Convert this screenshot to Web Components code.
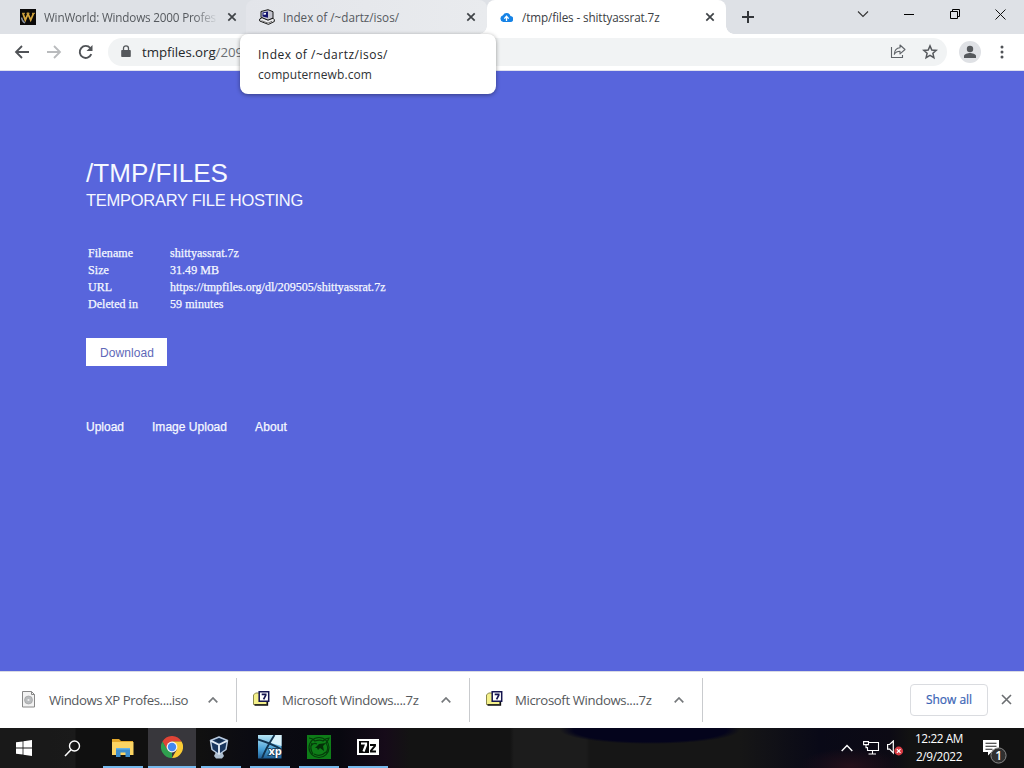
<!DOCTYPE html>
<html lang="en">
<head>
<meta charset="utf-8">
<title>/tmp/files</title>
<style>
html,body{margin:0;width:1024px;height:768px;overflow:hidden}
body{font-family:"Open Sans","Noto Sans",sans-serif;font-size:12px;color:#3c4043}
</style>
</head>
<body>
<desktop-screen></desktop-screen>
<script>
const define = (name, html, init) => customElements.define(name, class extends HTMLElement {
  connectedCallback() {
    if (this.shadowRoot) return;
    const t = document.createElement('template');
    t.innerHTML = html;
    this.attachShadow({ mode: 'open' }).append(t.content.cloneNode(true));
    if (init) init(this, this.shadowRoot);
  }
});

/* Single line label; tracks its letters so that they span the "w" attribute. */
define('fit-text', `<style>:host{display:block;white-space:pre;flex:none}span{display:inline-block}</style><span><slot></slot></span>`, (el, root) => {
  const s = root.querySelector('span'), w = +el.getAttribute('w');
  if (!w) return;
  el.style.width = w + 'px';
  const n = s.getBoundingClientRect().width;
  s.style.letterSpacing = ((w - n) / el.textContent.length).toFixed(3) + 'px';
});

const icons = {
  winworld: `<svg width="16" height="16" viewBox="0 0 16 16"><path d="M0 0h16v16H0z" fill="#0b0a0a"/><path d="M3 4.500l2.300 6.500L8 5l2.700 6L13.500 4.500" fill="none" stroke="#d3a53e" stroke-width="1.800"/><path d="M2 4.300h3M6.500 4.300h3M12 4.300h3" stroke="#d3a53e" stroke-width="1"/><path d="M1.500 8.500c.5 2.500 1.500 4.500 3.500 5.500" fill="none" stroke="#8b93a0" stroke-width="1.300"/></svg>`,
  computer: `<svg width="16" height="16" viewBox="0 0 16 16"><path d="M2 2.500L9 .7l5 2v6.500L9 11.500l-7-3z" fill="#c4c4ce" stroke="#161616"/><path d="M3.500 3.500L9 2.600v6.200L3.500 7.600z" fill="#14146e"/><path d="M4.500 4.300l2.500-.5v1.700l-2.500.2z" fill="#fff"/><path d="M.7 10l2.300-1.300 6 2.500 5-2 1.300 1.500v1.800L9.500 15.400.7 12z" fill="#ececee" stroke="#161616"/><path d="M2.500 11.700l6.500 2.400 4-1.800" fill="none" stroke="#777"/></svg>`,
  cloud: `<svg width="13" height="11" viewBox="0 0 13 11"><path d="M10.500 4A4 4 0 0 0 3 3.200 3.500 3.500 0 0 0 3.200 10H10a3 3 0 0 0 .5-6z" fill="#1683e6"/><path d="M6.500 9V4.500M4.300 6.600l2.200-2.300 2.200 2.300" stroke="#fff" stroke-width="1.300" fill="none"/></svg>`,
  close: `<svg width="10" height="10" viewBox="0 0 10 10"><path d="M1.300 1.300l7.400 7.400M8.700 1.300L1.300 8.700" stroke="#3f4347" stroke-width="1.700"/></svg>`,
  plus: `<svg width="12" height="12" viewBox="0 0 12 12"><path d="M6 0v12M0 6h12" stroke="#33363a" stroke-width="2"/></svg>`,
  back: `<svg width="16" height="14" viewBox="0 0 16 14"><path d="M15 7H2M8 1L2 7l6 6" fill="none" stroke="#505357" stroke-width="1.800"/></svg>`,
  forward: `<svg width="16" height="14" viewBox="0 0 16 14"><path d="M1 7h13M8 1l6 6-6 6" fill="none" stroke="#b9bbbd" stroke-width="1.800"/></svg>`,
  reload: `<svg width="16" height="16" viewBox="0 0 16 16"><path d="M13.300 10.200A6 6 0 1 1 12.300 4" fill="none" stroke="#505357" stroke-width="1.900"/><path d="M14.500 1v6h-6z" fill="#505357"/></svg>`,
  lock: `<svg width="10" height="13" viewBox="0 0 10 13"><path d="M1 5h8a.8.800 0 0 1 .8.800v5.400a.8.800 0 0 1-.8.800H1a.8.800 0 0 1-.8-.8V5.800A.8.800 0 0 1 1 5z" fill="#55585c"/><path d="M2.500 5.500V3.300a2.500 2.500 0 0 1 5 0v2.200" fill="none" stroke="#55585c" stroke-width="1.300"/></svg>`,
  share: `<svg width="16" height="14" viewBox="0 0 16 14"><path d="M1.500 3v10.500h11V11" fill="none" stroke="#5f6368" stroke-width="1.100"/><path d="M4.300 10.300C4.500 6.500 6.500 4 10 3.800V1L15 5.500l-5 4.300V7.200C7.200 7.200 5.500 8.200 4.300 10.300z" fill="none" stroke="#5f6368" stroke-width="1.100" stroke-linejoin="round"/></svg>`,
  star: `<svg width="16" height="16" viewBox="0 0 16 16"><path d="M8 1.900l1.800 4.100 4.400.4-3.300 2.900 1 4.400L8 11.400l-3.900 2.300 1-4.400-3.300-2.900 4.400-.4z" fill="none" stroke="#55585c" stroke-width="1.500"/></svg>`,
  avatar: `<svg width="22" height="22" viewBox="0 0 22 22"><circle cx="11" cy="11" r="11" fill="#dfe1e5"/><circle cx="11" cy="8" r="3.200" fill="#55585c"/><path d="M5 17v-2c0-2 4-3 6-3s6 1 6 3v2z" fill="#55585c"/></svg>`,
  dots: `<svg width="4" height="14" viewBox="0 0 4 14"><g fill="#505357"><circle cx="2" cy="2" r="1.500"/><circle cx="2" cy="7" r="1.500"/><circle cx="2" cy="12" r="1.500"/></g></svg>`,
  chevdown: `<svg width="12" height="7" viewBox="0 0 12 7"><path d="M1 .5l5 5 5-5" fill="none" stroke="#333" stroke-width="1.100"/></svg>`,
  minimize: `<svg width="10" height="1" viewBox="0 0 10 1"><path d="M0 0h10v1H0z"/></svg>`,
  restore: `<svg width="10" height="10" viewBox="0 0 10 10"><path d="M.5 2.500h7v7h-7zM2.500 2V.5h7v7H8" fill="none" stroke="#000"/></svg>`,
  wclose: `<svg width="11" height="11" viewBox="0 0 11 11"><path d="M.5.5l10 10M10.500.5l-10 10" stroke="#111"/></svg>`,
  disc: `<svg width="13" height="17" viewBox="0 0 13 17"><path d="M.5.5h9l3 3v12.500H.5z" fill="#f3f3f3" stroke="#888"/><path d="M9.500.5v3h3" fill="none" stroke="#888"/><circle cx="6.500" cy="9" r="4" fill="#b9bcbe" stroke="#999" stroke-width=".6"/><circle cx="6.500" cy="9" r="1.100" fill="#eee"/></svg>`,
  archive: `<svg width="17" height="15" viewBox="0 0 17 15"><path d="M.5 4l2-2h4l1 2h6v9.500H.5z" fill="#f4f08a" stroke="#8b894c"/><path d="M1.500 14h13V10" fill="none" stroke="#111" stroke-width="1.300"/><path d="M6.200.8h9.500v9.500H6.200z" fill="#fff" stroke="#15154f" stroke-width="1.500"/><path d="M8.700 3.300h4v1L10.600 8.400" fill="none" stroke="#15154f" stroke-width="1.700"/></svg>`,
  chevup: `<svg width="10" height="6" viewBox="0 0 10 6"><path d="M.7 5.300L5 1l4.300 4.300" fill="none" stroke="#75787b" stroke-width="1.700"/></svg>`,
  shelfclose: `<svg width="11" height="11" viewBox="0 0 11 11"><path d="M1 1l9 9M10 1l-9 9" stroke="#6b6e71" stroke-width="1.600"/></svg>`,
  windows: `<svg width="16" height="16" viewBox="0 0 16 16"><path d="M0 2.300L6.600 1.400v6.200H0zM7.400 1.300L16 0v7.600H7.400zM0 8.400h6.600v6.200L0 13.700zM7.400 8.400H16V16l-8.600-1.300z" fill="#fff"/></svg>`,
  search: `<svg width="17" height="17" viewBox="0 0 17 17"><circle cx="10.500" cy="6" r="5" fill="none" stroke="#fff" stroke-width="1.400"/><path d="M7 9.800L1 16" stroke="#fff" stroke-width="1.500"/></svg>`,
  folder: `<svg width="22" height="20" viewBox="0 0 22 20"><path d="M0 2h7l2 2h12v4H0z" fill="#e3a82b"/><path d="M0 5h21.500v13H0z" fill="#fbd463"/><path d="M4 20v-8.500h14V20h-4.500v-4.500h-5V20z" fill="#3d8dcc"/><path d="M4 11h14v1.500H4z" fill="#64b2e6"/></svg>`,
  chrome: `<svg width="22" height="22" viewBox="0 0 22 22"><path d="M1.470 5.500A11 11 0 0 1 20.530 5.500H11L6 14z" fill="#e04436"/><path d="M1.470 5.500L6.240 13.750 11 16.500 11 22A11 11 0 0 1 1.470 5.500z" fill="#2fa04f"/><path d="M20.530 5.500H11l4.760 8.250L11 22A11 11 0 0 0 20.530 5.500z" fill="#fbcc34"/><circle cx="11" cy="11" r="5.400" fill="#f5f5f5"/><circle cx="11" cy="11" r="4.200" fill="#4388ef"/></svg>`,
  cube: `<svg width="22" height="23" viewBox="0 0 22 23"><path d="M8 16h6l2 4-2 2.500H8L6 20z" fill="#aebfd0"/><path d="M11 1l8.500 3.500L18 13.500l-7 5-7-5L2.500 4.500z" fill="#19365e" stroke="#b9cbe0" stroke-width="1.500" stroke-linejoin="round"/><path d="M3 4.800l8 4 8-4M11 8.500v10" fill="none" stroke="#dfe9f3" stroke-width="1.900"/><path d="M6.500 4.300L11 2.500l4.500 1.800L11 6.500z" fill="#102947"/></svg>`,
  xp: `<svg width="24" height="24" viewBox="0 0 24 24"><defs><linearGradient id="g" x2="0" y2="1"><stop stop-color="#b6e4f5"/><stop offset=".6" stop-color="#4aa2d8"/><stop offset="1" stop-color="#1f5f96"/></linearGradient></defs><path d="M0 0h23.500v23.500H0z" fill="url(#g)"/><path d="M16 0h7.500v11L11 7.500z" fill="#d9f1fa"/><path d="M16.500 0C12 7 7 15 4 23.500M0 4.500C8 7 16 10 23.500 14.500" fill="none" stroke="#123450" stroke-width="1.900"/><text x="10.500" y="20" font-family="Open Sans,sans-serif" font-size="11" font-weight="700" fill="#fff" stroke="#123450" stroke-width="1.500" paint-order="stroke">xp</text></svg>`,
  green: `<svg width="24" height="24" viewBox="0 0 24 24"><path d="M0 0h24v24H0z" fill="#0e7d18"/><g fill="none" stroke="#053c0a" stroke-width="1.200"><circle cx="12" cy="12.500" r="10"/><path d="M2 3c3 0 5 2 6 3 3-1 6-1 8 0 2-2 4-3 6-3-1 3-2 4-3 5 2 3 2 7 0 10M5 8c-2 4-1 8 1 11M7 19c4 2 8 2 12-2M4 11c2-3 4-3 6-2"/></g><path d="M8 13l4-4 7-1-3 3 1 5-4-3-2 2-1-2z" fill="#042e08"/></svg>`,
  sevenzip: `<svg width="22" height="16" viewBox="0 0 22 16"><path d="M0 0h22v16H0z" fill="#fff"/><path d="M2 2h10v12H2z" fill="#080808"/><path d="M4 4.500h5V6L6.500 12.500" fill="none" stroke="#fff" stroke-width="2.200"/><path d="M13 6h5v1l-4 4.500v1h5" fill="none" stroke="#080808" stroke-width="1.900"/></svg>`,
  traychev: `<svg width="12" height="8" viewBox="0 0 12 8"><path d="M.7 7L6 1.500 11.300 7" fill="none" stroke="#fff" stroke-width="1.400"/></svg>`,
  network: `<svg width="17" height="14" viewBox="0 0 17 14"><path d="M6 1.500h9.500v8h-11V6.500M9.500 9.500v3M5.500 13h7.500" fill="none" stroke="#fff" stroke-width="1.100"/><path d="M.6.600h4.900v3H.6zM3 3.600v3h2" fill="none" stroke="#fff" stroke-width="1.100"/></svg>`,
  speaker: `<svg width="17" height="16" viewBox="0 0 17 16"><path d="M.6 4.500h2L6.300 1v12L2.600 9.200h-2z" fill="none" stroke="#fff" stroke-width="1.200"/><circle cx="11.700" cy="11" r="4.400" fill="#d83b43"/><path d="M9.900 9.200l3.600 3.600M13.500 9.200l-3.600 3.600" stroke="#fff" stroke-width="1.200"/></svg>`,
  notify: `<svg width="26" height="25" viewBox="0 0 26 25"><path d="M0 1h16v12H8.500L5 16.500V13H0z" fill="#fff"/><path d="M2.500 4.300h11M2.500 7.300h11M2.500 10.300h7" stroke="#222" stroke-width="1.100"/><circle cx="15.500" cy="16.500" r="7.600" fill="#303030" stroke="#888" stroke-width="1"/><text x="12.300" y="21" font-family="Open Sans,sans-serif" font-size="12" font-weight="600" fill="#fff">1</text></svg>`
};
define('ui-icon', `<style>:host{display:block;flex:none;line-height:0}svg{display:block}</style>`, (el, root) => {
  root.append(document.createRange().createContextualFragment(icons[el.getAttribute('name')]));
});

define('tab-item', `<style>
:host{display:flex;align-items:center;height:34px;box-sizing:border-box;flex:none;font-size:11.700px;color:#55595e}
.label{flex:1;overflow:hidden;min-width:0;padding-bottom:1px}
:host([fade]) .label{-webkit-mask:linear-gradient(90deg,#000 150px,transparent 174px)}
</style><slot name="icon"></slot><div class="label"><slot></slot></div><ui-icon name="close"></ui-icon>`);

define('tab-strip', `<style>
:host{display:flex;height:34px;background:#dee1e6}
.one{width:246px;padding:0 9px 0 20px;gap:8px}
.two{width:241px;padding:0 11px 0 13px;gap:8px;background:linear-gradient(90deg,#e3e5ea,#e9ebee);border-radius:8px 8px 0 0}
.three{width:239px;padding:0 11px 0 13px;gap:9px;background:#fff;border-radius:8px 8px 0 0;color:#3c4043;position:relative}
.three::before,.three::after{content:"";position:absolute;bottom:0;width:8px;height:8px}
.three::before{left:-8px;background:radial-gradient(circle at 0 0,transparent 7.500px,#fff 8px)}
.three::after{right:-8px;background:radial-gradient(circle at 100% 0,transparent 7.500px,#fff 8px)}
.new{margin:11px 0 0 16px}
.controls{display:flex;align-items:center;height:28px;margin-left:auto;padding-right:18px}
</style>
<tab-item class="one" fade><ui-icon slot="icon" name="winworld"></ui-icon><fit-text w="172">WinWorld: Windows 2000 Profes</fit-text></tab-item>
<tab-item class="two"><ui-icon slot="icon" name="computer"></ui-icon><fit-text w="116">Index of /~dartz/isos/</fit-text></tab-item>
<tab-item class="three"><ui-icon slot="icon" name="cloud"></ui-icon><fit-text w="137.500">/tmp/files - shittyassrat.7z</fit-text></tab-item>
<ui-icon class="new" name="plus"></ui-icon>
<div class="controls"><ui-icon name="chevdown"></ui-icon><ui-icon name="minimize" style="margin-left:35px"></ui-icon><ui-icon name="restore" style="margin-left:36px"></ui-icon><ui-icon name="wclose" style="margin-left:35px"></ui-icon></div>`);

define('tool-bar', `<style>
:host{display:flex;align-items:center;box-sizing:border-box;height:37px;padding:0 20px 1px 14px;background:#fff;border-bottom:1px solid #dfe0ee}
.url{display:flex;align-items:center;box-sizing:border-box;width:839px;height:28px;margin-left:14px;padding:0 9px 0 13px;border-radius:14px;background:#f1f3f4;font-size:13.300px;color:#6a6e73}
b{font-weight:400;color:#25282b}
.actions{display:flex;gap:16px;margin-left:auto}
</style>
<ui-icon name="back"></ui-icon><ui-icon name="forward" style="margin-left:16px"></ui-icon><ui-icon name="reload" style="margin-left:16px"></ui-icon>
<div class="url"><ui-icon name="lock"></ui-icon><fit-text w="101" style="margin-left:11px"><b>tmpfiles.org</b>/209</fit-text><div class="actions"><ui-icon name="share"></ui-icon><ui-icon name="star"></ui-icon></div></div>
<ui-icon name="avatar" style="margin-left:12px"></ui-icon><ui-icon name="dots" style="margin-left:auto"></ui-icon>`);

define('tab-tooltip', `<style>
:host{display:block;position:absolute;left:240px;top:34px;width:256px;height:60px;box-sizing:border-box;padding:11px 18px;background:#fff;border-radius:8px;box-shadow:0 1px 4px #0006;color:#303336;font-size:12px;line-height:20px}
.t{color:#222528;font-weight:500}
</style><fit-text class="t" w="130">Index of /~dartz/isos/</fit-text><fit-text w="114">computernewb.com</fit-text>`);

define('file-page', `<style>
:host{display:block;box-sizing:border-box;height:600px;padding:86px 86px 0;background:#5865dc;color:#f5f8ff;font-family:"Liberation Sans",Arial,sans-serif}
.h1{font-size:26px;line-height:32px}.h2{font-size:16.500px;line-height:22px}
.info{display:grid;grid-template-columns:82px auto;grid-auto-rows:17px;line-height:17px;margin:34px 0 0 2px;font:12px/17px "Liberation Serif","Times New Roman",serif;-webkit-text-stroke:.25px currentColor}
.btn{display:flex;justify-content:center;align-items:center;width:81px;height:28px;margin-top:25px;background:#fff;color:#6068b8;font-size:12px;padding:1px 0 0 1px;box-sizing:border-box}
nav{display:flex;gap:28px;margin-top:52px;font-size:12px;line-height:18px;-webkit-text-stroke:.25px currentColor}
</style>
<fit-text class="h1" w="142">/TMP/FILES</fit-text><fit-text class="h2" w="217">TEMPORARY FILE HOSTING</fit-text>
<div class="info"><fit-text w="45">Filename</fit-text><fit-text w="69">shittyassrat.7z</fit-text><fit-text w="21">Size</fit-text><fit-text w="49">31.49 MB</fit-text><fit-text w="24">URL</fit-text><fit-text w="215.500">https://tmpfiles.org/dl/209505/shittyassrat.7z</fit-text><fit-text w="50">Deleted in</fit-text><fit-text w="53.500">59 minutes</fit-text></div>
<div class="btn"><fit-text w="54">Download</fit-text></div>
<nav><fit-text w="38">Upload</fit-text><fit-text w="75">Image Upload</fit-text><fit-text w="32">About</fit-text></nav>`);

define('download-item', `<style>
:host{display:flex;align-items:center;box-sizing:border-box;height:44px;border-right:1px solid #c9cbce;padding-right:18px;flex:none;font-size:13.200px;color:#56595c}
.c{margin-left:auto}
</style><slot name="icon"></slot><slot></slot><ui-icon class="c" name="chevup"></ui-icon>`);

define('download-shelf', `<style>
:host{display:flex;align-items:center;box-sizing:border-box;height:57px;border-top:1px solid #d8dae3;background:#fff;padding-right:12px}
.a{width:237px;padding-left:22px}.b{width:233px;padding-left:16px}
.all{display:flex;align-items:center;justify-content:center;box-sizing:border-box;width:78px;height:32px;margin:0 13px 0 auto;border:1px solid #dadce0;border-radius:4px;color:#3a64b5;font-size:12px;padding-bottom:1px;-webkit-text-stroke:.2px currentColor}
</style>
<download-item class="a"><ui-icon slot="icon" name="disc" style="margin:0 14px 2px 0"></ui-icon><fit-text w="139">Windows XP Profes....iso</fit-text></download-item>
<download-item class="b"><ui-icon slot="icon" name="archive" style="margin:0 12px 4px 0"></ui-icon><fit-text w="136.500">Microsoft Windows....7z</fit-text></download-item>
<download-item class="b"><ui-icon slot="icon" name="archive" style="margin:0 12px 4px 0"></ui-icon><fit-text w="136.500">Microsoft Windows....7z</fit-text></download-item>
<div class="all"><fit-text w="46">Show all</fit-text></div><ui-icon name="shelfclose" style="margin-bottom:2px"></ui-icon>`);

define('task-button', `<style>
:host{display:flex;align-items:center;justify-content:center;box-sizing:border-box;height:40px;flex:none}
:host([open]){border-bottom:2px solid #76b9ed}
:host([active]){background:#38373c}
</style><slot></slot>`);

define('task-bar', `<style>
:host{display:flex;align-items:center;height:40px;color:#fff;background:radial-gradient(ellipse 90px 14px at 650px 2px,#04041c 85%,transparent),radial-gradient(ellipse 50px 18px at 850px 38px,#24101a,transparent),linear-gradient(90deg,#191919 0 50px,#1a1a1a 75px,#101010 76px 200px,#0b0b12 250px,#08080f 340px,#160b19 385px,#131313 410px 510px,#1c1c1c 514px 586px,#161616 590px 740px,#090917 820px,#0c0a14 890px,#121212 910px)}
.gap{margin-left:9px}
.tray{display:flex;align-items:center;margin-left:auto;padding-right:15px}
.clock{width:48px;margin:-2px 0 0 11px;font-size:11.800px;line-height:18px;display:flex;flex-direction:column;align-items:center}
</style>
<task-button style="width:48px"><ui-icon name="windows"></ui-icon></task-button>
<task-button style="width:48px"><ui-icon name="search"></ui-icon></task-button>
<task-button open style="width:40px;margin-left:7px"><ui-icon name="folder"></ui-icon></task-button>
<task-button open active style="width:48px;margin-left:5px"><ui-icon name="chrome"></ui-icon></task-button>
<task-button open style="width:40px;margin-left:5px"><ui-icon name="cube" style="margin-right:4px"></ui-icon></task-button>
<task-button open class="gap" style="width:40px"><ui-icon name="xp"></ui-icon></task-button>
<task-button open class="gap" style="width:40px"><ui-icon name="green"></ui-icon></task-button>
<task-button open class="gap" style="width:40px"><ui-icon name="sevenzip"></ui-icon></task-button>
<div class="tray"><ui-icon name="traychev"></ui-icon><ui-icon name="network" style="margin-left:10px"></ui-icon><ui-icon name="speaker" style="margin-left:7px"></ui-icon>
<div class="clock"><fit-text w="48">12:22 AM</fit-text><fit-text w="46">2/9/2022</fit-text></div><ui-icon name="notify" style="margin:6px 0 0 20px"></ui-icon></div>`);

define('desktop-screen', `<style>:host{display:flex;flex-direction:column;width:1024px;height:768px;overflow:hidden;position:relative}</style>
<tab-strip></tab-strip><tool-bar></tool-bar><file-page></file-page><download-shelf></download-shelf><task-bar></task-bar><tab-tooltip></tab-tooltip>`);
</script>
</body>
</html>
